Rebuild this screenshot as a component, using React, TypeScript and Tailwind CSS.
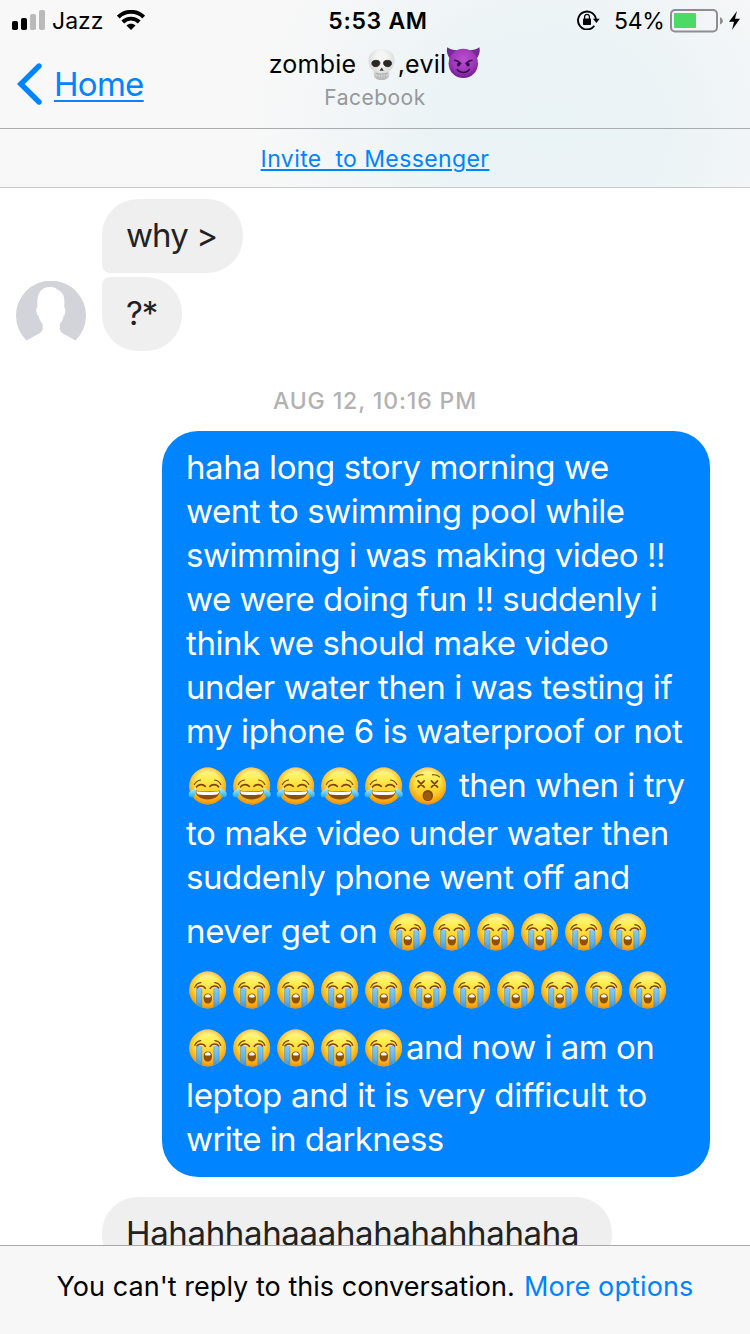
import type { ReactNode } from "react";

function Gradients() {
  return (
    <svg className="absolute size-0" aria-hidden="true">
      <defs>
        <linearGradient id="face" x1="0" y1="0" x2="0" y2="1">
          <stop offset="0" stopColor="#fff6a8" />
          <stop offset="0.28" stopColor="#fff056" />
          <stop offset="0.6" stopColor="#ffd52e" />
          <stop offset="1" stopColor="#fdac14" />
        </linearGradient>
        <radialGradient id="rim" cx="0.5" cy="0.46" r="0.56">
          <stop offset="0.6" stopColor="#f59a0c" stopOpacity="0" />
          <stop offset="0.85" stopColor="#f59a0c" stopOpacity="0.6" />
          <stop offset="1" stopColor="#e98208" stopOpacity="1" />
        </radialGradient>
        <linearGradient id="stream" x1="0" y1="0" x2="0" y2="1">
          <stop offset="0" stopColor="#86cbf8" />
          <stop offset="0.55" stopColor="#5fb2ee" />
          <stop offset="1" stopColor="#2f86cf" />
        </linearGradient>
        <linearGradient id="drop" x1="0" y1="0" x2="0" y2="1">
          <stop offset="0" stopColor="#b8f1ff" />
          <stop offset="1" stopColor="#1fa9ea" />
        </linearGradient>
        <radialGradient id="bone" cx="0.5" cy="0.3" r="0.7">
          <stop offset="0.3" stopColor="#f4f4f2" />
          <stop offset="0.75" stopColor="#d9dad9" />
          <stop offset="1" stopColor="#b3b5b5" />
        </radialGradient>
        <radialGradient id="imp" cx="0.5" cy="0.35" r="0.65">
          <stop offset="0" stopColor="#b950d0" />
          <stop offset="0.65" stopColor="#9d35b8" />
          <stop offset="1" stopColor="#6f1f91" />
        </radialGradient>
        <clipPath id="disc">
          <circle cx="22" cy="22" r="18.4" />
        </clipPath>
      </defs>
    </svg>
  );
}

function Face({ children }: { children: ReactNode }) {
  return (
    <svg viewBox="0 0 44 44" className="mt-[10.5px] size-11 shrink-0">
      <circle cx="21.7" cy="22" r="18.4" fill="url(#face)" />
      <circle cx="21.7" cy="22" r="18.4" fill="url(#rim)" />
      {children}
    </svg>
  );
}

function Sob() {
  return (
    <Face>
      <g clipPath="url(#disc)">
        <path d="M10.600 20h5.200V42h-5.200zM27.800 20H33V42h-5.200z" fill="url(#stream)" />
        <path d="M10.600 21v17M15.800 21v20M27.800 21v20M33 21v17" stroke="#4a86ab" strokeWidth=".5" />
      </g>
      <g fill="none" stroke="#7d4306" strokeLinecap="round">
        <path d="M8.800 19.400C9.800 16.600 12 14.900 14.800 14.600M34.800 19.400C33.800 16.600 31.600 14.900 28.800 14.600" strokeWidth="1.200" />
        <path d="M11 19.800c2-2.600 6.600-2.500 8.400.5M32.600 19.800c-2-2.600-6.600-2.500-8.400.5" strokeWidth="1.600" />
      </g>
      <path d="M21.800 25.400c2.700 0 4.200 2 4.200 4.800 0 3.400-1.700 5.400-4.200 5.400s-4.200-2-4.200-5.400c0-2.800 1.500-4.800 4.200-4.800z" fill="#8f5008" />
      <path d="M18.800 29c.2-1.800 1.400-2.800 3-2.800s2.800 1 3 2.800c-1.600.7-4.400.7-6 0z" fill="#fff" />
    </Face>
  );
}

function Joy() {
  return (
    <Face>
      <g fill="none" stroke="#7d4306" strokeLinecap="round">
        <path d="M8.400 20.400C9.600 18 11.800 16.400 14.600 16M34.800 20.400C33.600 18 31.400 16.400 28.600 16" strokeWidth="1.200" />
        <path d="M10.600 22.800c2-2.800 6.600-3 8.800-.3M32.600 22.800c-2-2.800-6.600-3-8.800-.3" strokeWidth="1.600" />
      </g>
      <path d="M9.400 26.600c7.600 1.200 17 1.200 24.600 0-.4 5.400-5 8.800-12.300 8.800S9.800 32 9.400 26.600z" fill="#8c4f0a" />
      <path d="M10.200 27.200c7.400 1.100 15.600 1.100 23 0-.2 2-1.200 3-2.400 3.300-5.600.8-12.600.8-18.200 0-1.200-.3-2.200-1.300-2.400-3.300z" fill="#fff" />
      <path d="M9.500 23.800c.6 3.600.2 7.600-2.600 9.300-2 1.100-4.400-.3-4.300-2.600.1-3.300 3.600-4.600 6.900-6.700z" fill="url(#drop)" />
      <path d="M33.900 23.800c-.6 3.600-.2 7.600 2.600 9.300 2 1.100 4.400-.3 4.300-2.600-.1-3.300-3.600-4.600-6.900-6.700z" fill="url(#drop)" />
    </Face>
  );
}

function Dizzy() {
  return (
    <Face>
      <g fill="none" stroke="#7d4306" strokeLinecap="round">
        <path d="M10 12.800c1.600-1.600 4-2.300 7-2M33.400 12.800c-1.600-1.600-4-2.300-7-2" strokeWidth="1.200" />
        <path d="M12 16.900l6.200 6.200M18.200 16.900l-6.200 6.200M25.400 16.900l6.200 6.200M31.600 16.900l-6.200 6.200" strokeWidth="1.700" />
      </g>
      <ellipse cx="21.800" cy="31.500" rx="5.200" ry="5.500" fill="#824607" />
      <ellipse cx="21.800" cy="32.200" rx="3.800" ry="4.300" fill="#9c5a10" />
    </Face>
  );
}

function Skull() {
  return (
    <svg viewBox="0 0 28 34" className="mt-0.5 ml-[11px] h-[34px] w-7">
      <path d="M13.500 1C21 1 26.500 5.200 26.500 12c0 3-.6 5.200-1.600 7.400-.8 1.700-2.700 2.300-3.500 3.600-.5 1.200 0 3-.5 5-.6 2.500-3.400 4-7.400 4s-6.800-1.500-7.400-4c-.5-2 0-3.800-.5-5-.8-1.300-2.700-1.900-3.500-3.600C1.100 17.200.5 15 .5 12 .5 5.200 6 1 13.500 1z" fill="url(#bone)" />
      <path d="M4 14.200c.6-2.200 6.400-2.600 7.600-.4 1 2.200-.6 4.800-3.600 4.900-2.800.1-4.700-1.700-4-4.500zM23.400 14.200c-.6-2.200-6.400-2.600-7.600-.4-1 2.200.6 4.800 3.600 4.900 2.800.1 4.700-1.700 4-4.500z" fill="#2b2724" stroke="#2b2724" strokeWidth=".8" />
      <path d="M13.700 19.400l2 3.200c-.6.6-1.400 0-2-.2-.6.200-1.400.8-2 .2z" fill="#3a3532" />
      <path d="M7.600 25c3.800 1.600 8.400 1.600 12.200 0" fill="none" stroke="#999a99" strokeWidth=".9" />
      <path d="M10 26.400v4M12.500 27v4.400M15 27v4.400M17.500 26.400v4" stroke="#b0b1b0" strokeWidth=".8" />
    </svg>
  );
}

function Imp() {
  return (
    <svg viewBox="0 0 35 34" className="-mt-0.5 h-[34px] w-[35px]">
      <path d="M1.300 1.300c2.400 2.300 6.300 2.500 10.200 3.200L4.300 13C1.400 9.600.1 5.200 1.300 1.300zM33.300 1.300c-2.400 2.300-6.300 2.500-10.200 3.200l7.200 8.500c2.900-3.400 4.200-7.800 3-11.700z" fill="#762894" />
      <circle cx="17.300" cy="17.400" r="14.700" fill="url(#imp)" />
      <path d="M8.600 14.200c2 .2 4.400 1.300 6.200 3.200M26 14.200c-2 .2-4.400 1.300-6.200 3.200" fill="none" stroke="#34094b" strokeWidth="1.400" strokeLinecap="round" />
      <ellipse cx="12.600" cy="18.500" rx="1.700" ry="2.100" fill="#34094b" />
      <ellipse cx="22" cy="18.500" rx="1.700" ry="2.100" fill="#34094b" />
      <path d="M11.200 23.400c2.600 4 9.600 4 12.200 0" fill="none" stroke="#34094b" strokeWidth="1.500" strokeLinecap="round" />
    </svg>
  );
}

function StatusBar() {
  return (
    <div className="grid h-[42px] grid-cols-[250px_1fr_250px] items-center text-[23px] leading-7 text-black">
      <div className="flex items-center pl-3">
        <svg viewBox="0 0 33 20" className="-mt-0.5 h-5 w-[33px]">
          <rect y="11" width="6" height="9" rx="1.800" />
          <rect x="9" y="8" width="6" height="12" rx="1.800" />
          <rect x="18" y="4" width="6" height="16" rx="1.800" fill="#bababa" />
          <rect x="27" width="6" height="20" rx="1.800" fill="#bababa" />
        </svg>
        <span className="ml-[7px] w-[52px]">Jazz</span>
        <svg viewBox="0 0 28 20" className="-mt-0.5 ml-[13px] h-5 w-7">
          <g fill="none" stroke="#000" strokeWidth="3.900">
            <path d="M1.300 7C8.300.1 19.700.1 26.700 7" />
            <path d="M5.800 12c4.500-4.500 11.900-4.500 16.400 0" />
          </g>
          <path d="M14 20l-4.500-4.400c2.300-2.400 6.700-2.400 9 0z" />
        </svg>
      </div>
      <span className="pl-[6px] text-center font-semibold tracking-[0.7px]">5:53 AM</span>
      <div className="flex items-center justify-end pr-[10px]">
        <svg viewBox="0 0 23 20" className="-mt-0.5 h-5 w-[23px]">
          <path d="M17.300 15.800A9 9 0 1 1 19 9.600" fill="none" stroke="#000" strokeWidth="1.900" />
          <path d="M15.900 8.800h6.800l-3.300 4.300z" />
          <rect x="6" y="8.600" width="8" height="6.400" rx=".8" />
          <path d="M7.600 9V6.800c0-3.200 4.800-3.200 4.800 0V9" fill="none" stroke="#000" strokeWidth="1.300" />
        </svg>
        <span className="ml-[14px] w-[56px] tracking-[-0.3px]">54%</span>
        <svg viewBox="0 0 54 24" className="-mt-px h-6 w-[54px]">
          <rect x="1" y="1" width="46" height="21.500" rx="4" fill="none" stroke="#8e8e90" strokeWidth="2" />
          <rect x="4" y="4" width="22" height="15" rx="1" fill="#4cd964" />
          <path d="M50 8.200c3.800 1.200 3.800 6 0 7.200z" fill="#8e8e90" />
        </svg>
        <svg viewBox="0 0 11 19" className="-mt-0.5 ml-[5px] h-[19px] w-[11px]">
          <path d="M8 0L0 10.800h5L3 19l8-11.200H6z" />
        </svg>
      </div>
    </div>
  );
}

function NavBar() {
  return (
    <div className="grid h-[86px] grid-cols-[240px_1fr_240px]">
      <div className="flex items-start pt-5 pl-[17px] text-[#0084ff]">
        <svg viewBox="0 0 26 44" className="h-11 w-[26px]">
          <path d="M22 4L3.800 22 22 40" fill="none" stroke="currentColor" strokeWidth="5.400" strokeLinecap="round" />
        </svg>
        <span className="ml-[11px] text-[33px] leading-[44px] tracking-[-0.7px] underline decoration-2 underline-offset-4">Home</span>
      </div>
      <div className="flex flex-col items-center pt-1.5">
        <div className="flex h-8 items-center text-[25px] leading-8 tracking-[0.25px] text-black">
          <span className="w-[88px]">zombie</span>
          <Skull />
          <span className="ml-0.5">,evil</span>
          <Imp />
        </div>
        <span className="mt-[5px] text-[21px] leading-[26px] tracking-[0.5px] text-[#97989a]">Facebook</span>
      </div>
    </div>
  );
}

function Avatar() {
  return (
    <svg viewBox="0 0 70 70" className="size-[70px] shrink-0">
      <path d="M10.500 59.600A35 35 0 1 1 59.500 59.600L50 54.300C45 51.600 43.800 50 43.800 47V43C45.800 40.800 47 38.200 47.500 35.200C49 34.300 49.500 31.500 49.300 28.500C49.200 27 48.800 26.300 48.200 26.400C48.800 19 48.500 13.500 44.500 10.500C43 9 41.800 9.200 41 8.200C39.600 6.800 37.500 6 34.500 6C22 6 20.800 16 21.400 26.400C20.600 26.400 20.300 27 20.300 28.500C20.300 31.500 21 34.300 22.800 35.200C23.300 38.200 24.600 40.800 26.700 43V47C26.700 50 25.200 51.600 20 54.300Z" fill="#d3d4d9" />
    </svg>
  );
}

function Line({ className, children }: { className: string; children: ReactNode }) {
  return <p className={`whitespace-nowrap ${className}`}>{children}</p>;
}

function EmojiLine({ children }: { children: ReactNode }) {
  return <div className="flex h-[58px] whitespace-pre">{children}</div>;
}

function Sobs({ count }: { count: number }) {
  return (
    <>
      {Array.from({ length: count }, (_, i) => (
        <Sob key={i} />
      ))}
    </>
  );
}

export default function App() {
  return (
    <div className="flex h-[1334px] w-[750px] flex-col overflow-hidden bg-white font-['Inter','Liberation_Sans',sans-serif]">
      <Gradients />
      <header className="shrink-0 bg-[#f8f8f8] bg-[radial-gradient(ellipse_300px_250px_at_550px_130px,#eaf3f6_0%,#ebf3f6_35%,#f8f8f8_100%)]">
        <StatusBar />
        <NavBar />
        <div className="flex h-[60px] items-center justify-center border-y border-t-[#a9acae] border-b-[#c9cacc] pt-0.5 text-[23px] tracking-[0.4px] whitespace-pre text-[#0084ff]">
          <a className="underline decoration-2 underline-offset-2">{"Invite  to Messenger"}</a>
        </div>
      </header>

      <main className="min-h-0 flex-1 overflow-hidden pt-[11px] text-[33px] leading-[44px] text-[#222]">
        <div className="flex items-end gap-4 pl-4">
          <Avatar />
          <div className="flex flex-col items-start gap-1">
            <div className="h-[74px] w-[141px] rounded-[36px] rounded-bl-[8px] bg-[#efefef] pt-3.5 pl-6 tracking-[-0.9px]">why &gt;</div>
            <div className="h-[74px] w-20 rounded-[36px] rounded-tl-[8px] bg-[#efefef] pt-3.5 pl-6 tracking-[-1.2px]">?*</div>
          </div>
        </div>

        <div className="h-20 pt-9 text-center text-[23px] leading-7 font-medium tracking-[0.87px] text-[#b2b2b2]">AUG 12, 10:16 PM</div>

        <div className="ml-[162px] h-[746px] w-[548px] rounded-[36px] bg-[#0084ff] pt-3.5 pl-6 text-white">
          <Line className="tracking-[-0.45px]">haha long story morning we</Line>
          <Line className="tracking-[-0.45px]">went to swimming pool while</Line>
          <Line className="tracking-[-0.48px]">swimming i was making video !!</Line>
          <Line className="tracking-[-0.5px]">we were doing fun !! suddenly i</Line>
          <Line className="tracking-[-0.41px]">think we should make video</Line>
          <Line className="tracking-[-0.42px]">under water then i was testing if</Line>
          <Line className="tracking-[-0.4px]">my iphone 6 is waterproof or not</Line>
          <EmojiLine>
            <Joy />
            <Joy />
            <Joy />
            <Joy />
            <Joy />
            <Dizzy />
            <span className="mt-2.5 ml-[9px] tracking-[-0.45px]">then when i try</span>
          </EmojiLine>
          <Line className="tracking-[-0.37px]">to make video under water then</Line>
          <Line className="tracking-[-0.42px]">suddenly phone went off and</Line>
          <EmojiLine>
            <span className="mt-2.5 w-[200px] tracking-[-0.36px]">never get on</span>
            <Sobs count={6} />
          </EmojiLine>
          <EmojiLine>
            <Sobs count={11} />
          </EmojiLine>
          <EmojiLine>
            <Sobs count={5} />
            <span className="mt-2.5 tracking-[-0.5px]">and now i am on</span>
          </EmojiLine>
          <Line className="tracking-[-0.32px]">leptop and it is very difficult to</Line>
          <Line className="tracking-[-0.55px]">write in darkness</Line>
        </div>

        <div className="mt-5 ml-[102px] h-[74px] w-[510px] rounded-[36px] bg-[#efefef] pt-3.5 pl-6 tracking-[-0.35px]">Hahahhahaaahahahahhahaha</div>
      </main>

      <footer className="flex h-[89px] shrink-0 items-center justify-center border-t border-[#a9a9a9] bg-[#f7f7f7] pb-1.5 text-[27px] tracking-[0.04px] whitespace-pre text-black">
        You can't reply to this conversation. <a className="ml-[1.500px] tracking-[0.120px] text-[#0084ff]">More options</a>
      </footer>
    </div>
  );
}
